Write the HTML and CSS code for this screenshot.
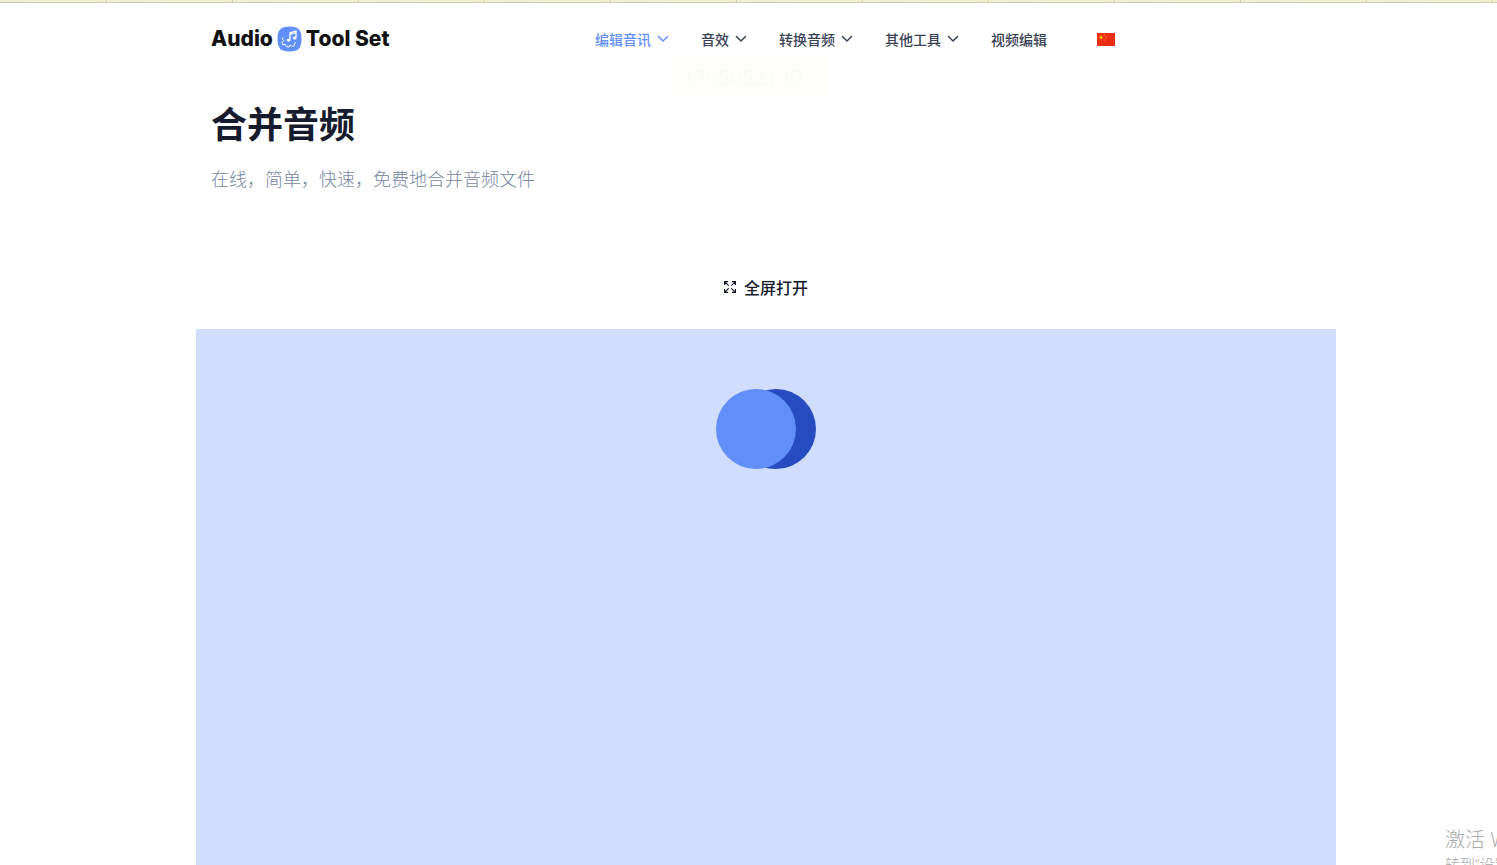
FILE: index.html
```
<!DOCTYPE html>
<html lang="zh-CN">
<head>
  <meta charset="UTF-8" />
  <meta name="viewport" content="width=device-width, initial-scale=1.0"/>
  <title>合并音频</title>
  <link rel="stylesheet" href="styles.css">
</head>
<body>
  <div class="top-strip"></div>

  <header class="header">
    <a class="logo" href="#">
      <span>Audio</span>
      <svg class="logo-icon" width="25" height="26" viewBox="0 0 25 26" fill="none">
        <path d="M12.500 .5C21.500 .5 24.500 4 24.500 13S21.500 25.500 12.500 25.500 .5 22 .5 13 3.500 .5 12.500 .5Z" fill="#608ffa"/>
        <path d="M13 13.500V6.800L19 5V11.500M13 8.300L19 6.500" stroke="#fff" stroke-width="1.300"/>
        <ellipse cx="11.600" cy="14" rx="1.900" ry="1.600" fill="#fff"/>
        <ellipse cx="17.700" cy="12" rx="1.900" ry="1.600" fill="#fff"/>
        <path d="M6 11.500L5.300 13 6.800 14.500 5 16.500 6 18.800 8.500 18.500 10 20.800 12 21 13 19 15.500 20.500 17.500 19.500 17.300 17.500 19 16.500" stroke="#fff" stroke-width="1" stroke-linejoin="round"/>
      </svg>
      <span>Tool Set</span>
    </a>

    <nav class="nav">
      <button class="nav-item active" type="button">编辑音讯
        <svg class="chevron" width="12" height="8" viewBox="0 0 12 8"><path d="M1.500 1.500L6 6L10.500 1.500"/></svg>
      </button>
      <button class="nav-item" type="button">音效
        <svg class="chevron" width="12" height="8" viewBox="0 0 12 8"><path d="M1.500 1.500L6 6L10.500 1.500"/></svg>
      </button>
      <button class="nav-item" type="button">转换音频
        <svg class="chevron" width="12" height="8" viewBox="0 0 12 8"><path d="M1.500 1.500L6 6L10.500 1.500"/></svg>
      </button>
      <button class="nav-item" type="button">其他工具
        <svg class="chevron" width="12" height="8" viewBox="0 0 12 8"><path d="M1.500 1.500L6 6L10.500 1.500"/></svg>
      </button>
      <a class="nav-item" href="#">视频编辑</a>
      <button class="language" type="button" aria-label="中文">
        <svg width="18" height="13" viewBox="0 0 18 13">
          <rect width="18" height="13" fill="#eb2d14"/>
          <path d="M4 2L4.700 3.600 6.300 3.700 5 4.700 5.500 6.300 4 5.400 2.500 6.300 3 4.700 1.700 3.700 3.300 3.600Z" fill="#ffc800"/>
          <g fill="#f9a01b">
            <circle cx="7.300" cy="1.700" r=".6"/>
            <circle cx="8.800" cy="3.300" r=".6"/>
            <circle cx="8.800" cy="5.500" r=".6"/>
            <circle cx="7.300" cy="7" r=".6"/>
          </g>
        </svg>
      </button>
    </nav>
    <div class="float-tip">1765852139</div>
  </header>

  <main>
    <section class="intro">
      <h1>合并音频</h1>
      <p>在线，简单，快速，免费地合并音频文件</p>
    </section>

    <button class="fullscreen" type="button">
      <svg width="12" height="12" viewBox="0 0 12 12">
        <path d="M.6 4V.6H4M8 .6H11.400V4M11.400 8V11.400H8M4 11.400H.6V8M.8 .8L4.700 4.700M11.200 .8L7.300 4.700M.8 11.200L4.700 7.300M11.200 11.200L7.300 7.300"/>
      </svg>
      全屏打开
    </button>

    <section class="editor">
      <div class="loader">
        <span class="dot light"></span>
        <span class="dot dark"></span>
      </div>
    </section>
  </main>

  <aside class="watermark">
    <div class="watermark-title">激活 Windows</div>
    <div class="watermark-text">转到“设置”以激活 Windows。</div>
  </aside>
</body>
</html>
```
FILE: styles.css
```
* {
  box-sizing: border-box;
}

body {
  margin: 0;
  min-height: 100vh;
  display: flex;
  flex-direction: column;
  background: #fff;
  color: #161c2d;
  font-family: "Noto Sans CJK SC", sans-serif;
}

button {
  border: none;
  padding: 0;
  background: none;
  font-family: inherit;
  cursor: pointer;
}

a {
  text-decoration: none;
}

.top-strip {
  height: 3px;
  border-bottom: 1px solid #cfceb2;
  background: linear-gradient(to right, #f3f0da 0, #f0edcf 125px, #cfceb2 125px);
  background-position: -19px 0;
  background-size: 126px 3px;
}

.header {
  position: relative;
  display: flex;
  align-items: center;
  height: 72px;
  margin: 0 161px 0 196px;
  padding: 0 15px;
}

.logo {
  display: flex;
  align-items: center;
  gap: 4px;
  width: 384px;
  color: #111;
  font: 800 21px/28px Inter, sans-serif;
}

.nav {
  display: flex;
  align-items: center;
  gap: 32px;
}

.nav-item {
  display: flex;
  align-items: center;
  gap: 6px;
  color: #384256;
  font-size: 14px;
  font-weight: 500;
  line-height: 20px;
  white-space: nowrap;
}

.nav-item.active {
  color: #6490fa;
}

.chevron {
  fill: none;
  stroke: currentColor;
  stroke-width: 1.5;
  stroke-linecap: round;
}

.language {
  display: flex;
  margin-left: 18px;
}

.float-tip {
  position: absolute;
  top: 54px;
  left: 475px;
  width: 157px;
  height: 40px;
  padding-left: 11px;
  background: #fffffa;
  color: #fbfbf6;
  font: 24px/40px "Liberation Serif", serif;
}

main {
  display: flex;
  flex: 1;
  flex-direction: column;
  margin: 0 161px 0 196px;
}

.intro {
  padding: 23px 15px 83px;
}

h1 {
  margin: 0;
  font-size: 36px;
  font-weight: 700;
  line-height: 48px;
}

.intro p {
  margin: 18px 0 0;
  color: #7587a3;
  font-size: 18px;
  font-weight: 300;
  line-height: 28px;
}

.fullscreen {
  display: flex;
  align-items: center;
  align-self: center;
  gap: 8px;
  margin-bottom: 30px;
  color: #161c2d;
  font-size: 16px;
  font-weight: 500;
  line-height: 24px;
}

.fullscreen svg {
  fill: none;
  stroke: currentColor;
  stroke-width: 1.2;
}

.editor {
  flex: 1;
  padding-top: 60px;
  background: #d0ddff;
}

.loader {
  display: flex;
  justify-content: center;
}

.dot {
  width: 80px;
  height: 80px;
  border-radius: 50%;
}

.light {
  z-index: 1;
  background: #608ffa;
}

.dark {
  margin-left: -60px;
  background: #274bc1;
}

/* runs off the right and bottom edges of the window */
.watermark {
  position: absolute;
  right: 0;
  bottom: 0;
  width: 52px;
  height: 39px;
  overflow: hidden;
  color: #aaa;
  font-family: "Open Sans", "Noto Sans CJK SC", sans-serif;
  font-weight: 300;
  white-space: nowrap;
}

.watermark-title {
  font-size: 20px;
  line-height: 28px;
}

.watermark-text {
  font-size: 15px;
  line-height: 20px;
}
```
